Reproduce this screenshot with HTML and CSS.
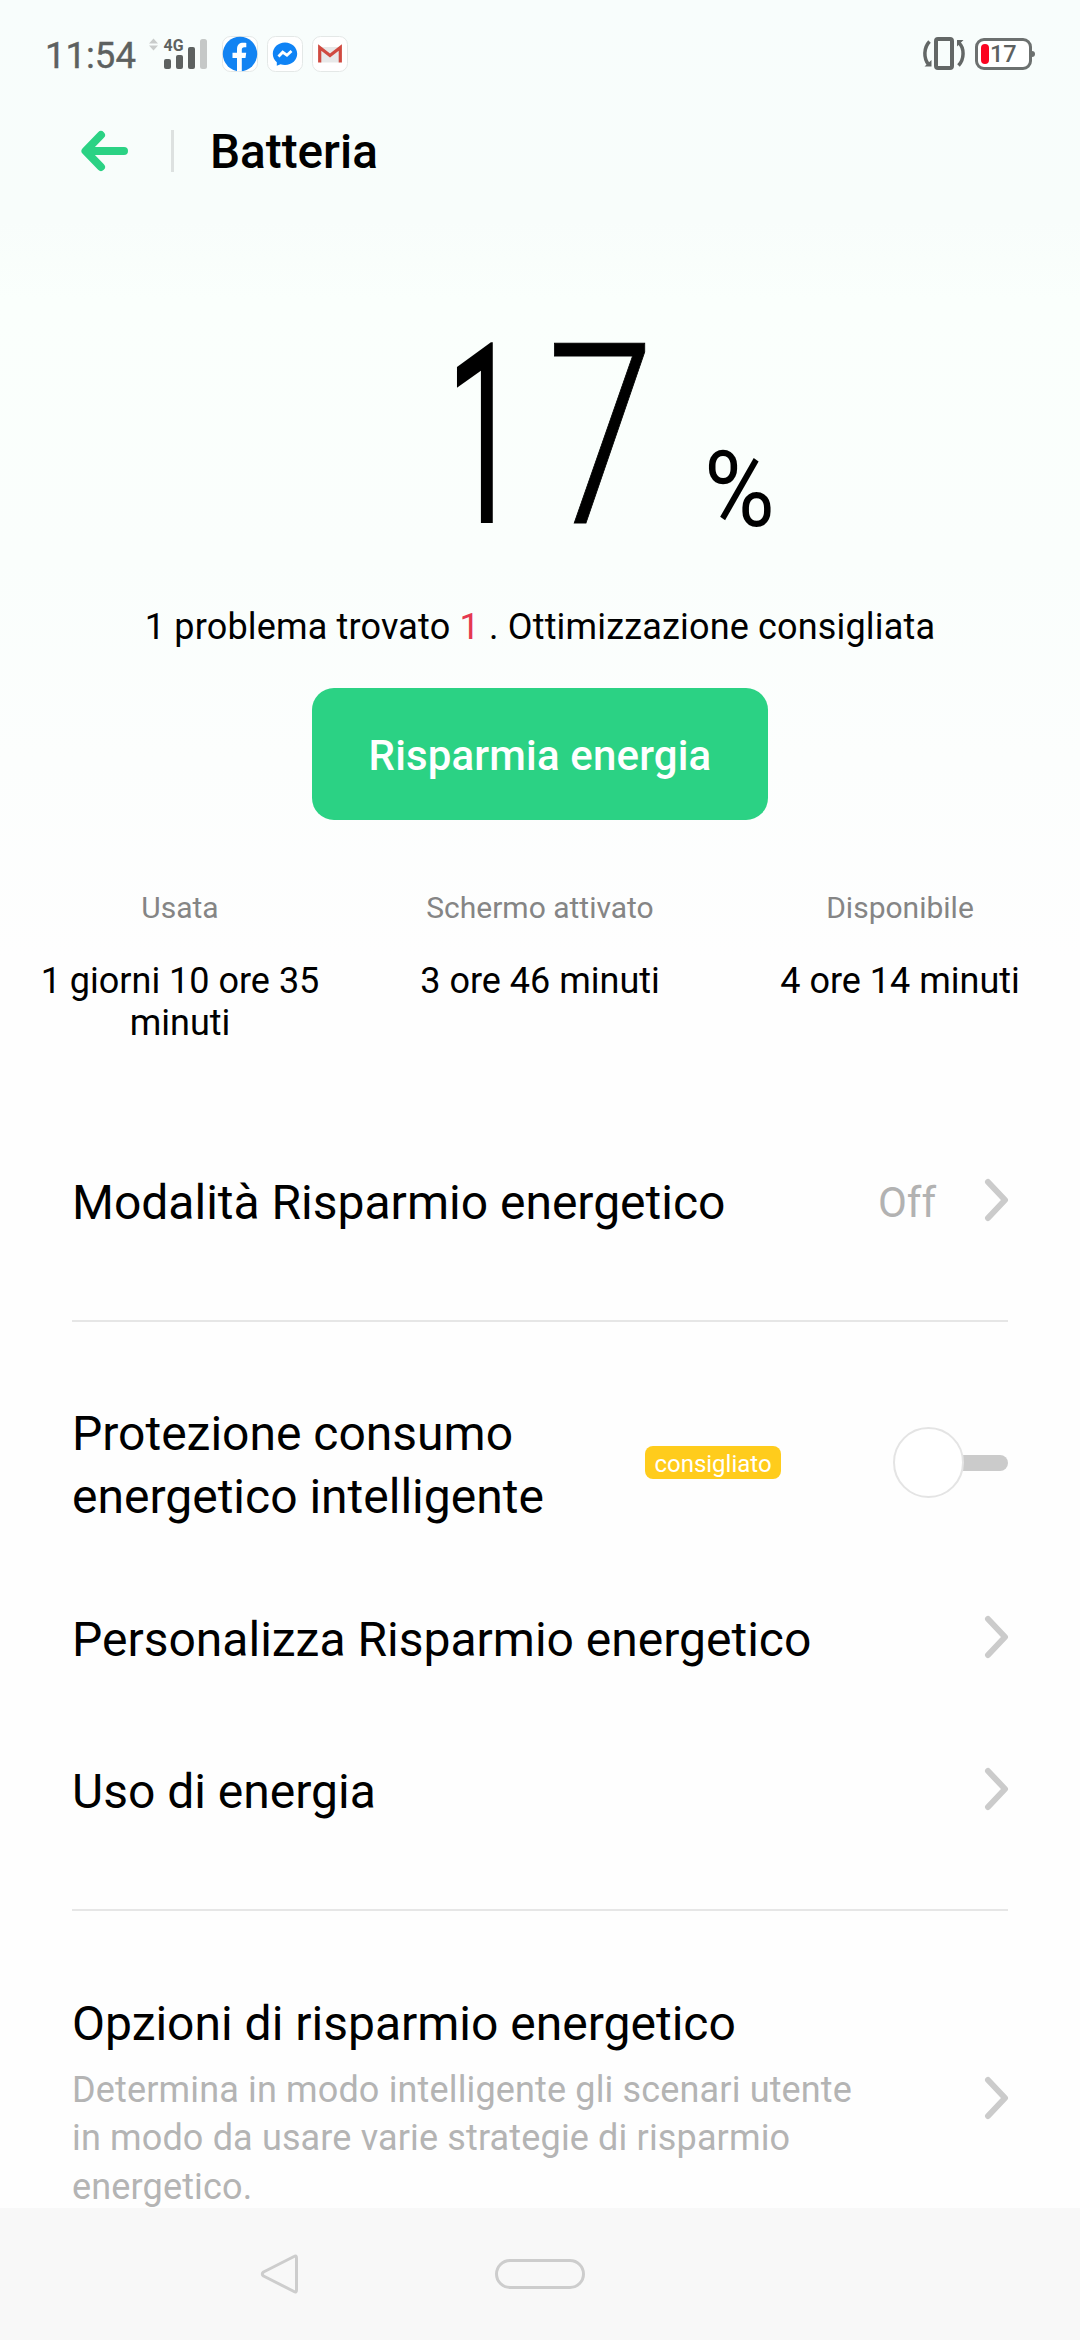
FILE: index.html
```html
<!DOCTYPE html>
<html lang="it">
<head>
<meta charset="utf-8">
<title>Batteria</title>
<link rel="stylesheet" href="styles.css">
</head>
<body>
<div class="screen">
  <header class="status">
    <span class="clock">11:54</span>
    <svg class="signal" width="60" height="36" viewBox="0 0 60 36">
      <path d="M0 7.500L4.500 2.500L9 7.500zM0 9.500L4.500 14.500L9 9.500z" fill="#c9cccb"/>
      <text class="net" x="14.500" y="14.500" textLength="20" lengthAdjust="spacingAndGlyphs">4G</text>
      <g fill="#5d6160">
        <rect x="15" y="23" width="7" height="10" rx="2"/>
        <rect x="27" y="19" width="7" height="14" rx="2"/>
        <rect x="39" y="11" width="7" height="22" rx="2"/>
      </g>
      <rect x="51" y="3" width="7" height="30" rx="2.500" fill="#c5c8c7"/>
    </svg>
    <svg class="app" width="36" height="36" viewBox="0 0 36 36">
      <rect x=".5" y=".5" width="35" height="35" rx="8" fill="#fff" stroke="#e4e8e7"/>
      <circle cx="18" cy="18" r="17.200" fill="#1283f2"/>
      <path d="M15 35.500V22h-4.500v-5.200H15v-3.500c0-4.600 2.500-6.500 6.300-6.500 1.600 0 3 .2 3 .2v4.200h-2c-1.800 0-2.500 1-2.500 2.300v3.300h4.400l-.7 5.200h-3.700v13.500z" fill="#fff"/>
    </svg>
    <svg class="app" width="36" height="36" viewBox="0 0 36 36">
      <rect x=".5" y=".5" width="35" height="35" rx="8" fill="#fff" stroke="#e4e8e7"/>
      <path d="M18 6.500c-7 0-12.200 5-12.200 11.300 0 3.500 1.500 6.300 4 8.400v3.600l3.700-1.500c1.400.4 3 .7 4.500.7 7 0 12.200-5 12.200-11.200S25 6.500 18 6.500z" fill="#0f83f5"/>
      <path d="M11.500 20.500l4.200-4.300 4.200 3 4.600-4.300" fill="none" stroke="#fff" stroke-width="2.800"/>
    </svg>
    <svg class="app" width="36" height="36" viewBox="0 0 36 36">
      <rect x=".5" y=".5" width="35" height="35" rx="8" fill="#fff" stroke="#e4e8e7"/>
      <path d="M8 11h20v15.500H8z" fill="#e8e9e9"/>
      <path d="M7.700 26.500V11.500L18 19.500L28.300 11.500V26.500" fill="none" stroke="#d04a40" stroke-width="3.200"/>
    </svg>
    <svg class="vibrate" width="44" height="36" viewBox="0 0 44 36">
      <rect x="14" y="3" width="16" height="29" rx="2" fill="none" stroke="#636766" stroke-width="4"/>
      <path d="M7.500 5.500C1.500 12 1.500 22 6.500 28.500M36.500 29.500C42.500 23 42.500 12 37 7" fill="none" stroke="#636766" stroke-width="3.500"/>
      <path d="M2.500 30.500h7v-6.500zM35 4h6.500l-6.500 6.500z" fill="#636766"/>
    </svg>
    <div class="battery"><i></i><span>17</span></div>
  </header>

  <div class="toolbar">
    <svg width="48" height="42" viewBox="0 0 48 42" fill="none" stroke="#2bd284" stroke-width="8" stroke-linecap="round" stroke-linejoin="round">
      <path d="M43 21H6M20 5L4.500 21L20 37"/>
    </svg>
    <span class="rule"></span>
    <h1>Batteria</h1>
  </div>

  <section class="hero">
    <div class="level"><span class="one">1</span><span class="seven">7</span><span class="unit">%</span></div>
    <p class="notice">1 problema trovato <b>1</b> . Ottimizzazione consigliata</p>
    <button class="save">Risparmia energia</button>
  </section>

  <section class="stats">
    <div><h2>Usata</h2><p>1 giorni 10 ore 35 minuti</p></div>
    <div><h2>Schermo attivato</h2><p>3 ore 46 minuti</p></div>
    <div><h2>Disponibile</h2><p>4 ore 14 minuti</p></div>
  </section>

  <main class="list">
    <div class="row">
      <span class="title">Modalità Risparmio energetico</span>
      <span class="value">Off</span>
      <svg class="chev" width="26" height="44" viewBox="0 0 26 44"><path d="M4 4L21 22L4 40"/></svg>
    </div>
    <hr>
    <div class="row tall">
      <span class="title narrow">Protezione consumo energetico intelligente</span>
      <span class="badge">consigliato</span>
      <span class="toggle"><i></i></span>
    </div>
    <div class="row">
      <span class="title">Personalizza Risparmio energetico</span>
      <svg class="chev" width="26" height="44" viewBox="0 0 26 44"><path d="M4 4L21 22L4 40"/></svg>
    </div>
    <div class="row">
      <span class="title">Uso di energia</span>
      <svg class="chev" width="26" height="44" viewBox="0 0 26 44"><path d="M4 4L21 22L4 40"/></svg>
    </div>
    <hr>
    <div class="row options">
      <div class="copy">
        <span class="title">Opzioni di risparmio energetico</span>
        <p>Determina in modo intelligente gli scenari utente in modo da usare varie strategie di risparmio energetico.</p>
      </div>
      <svg class="chev" width="26" height="44" viewBox="0 0 26 44"><path d="M4 4L21 22L4 40"/></svg>
    </div>
  </main>

  <nav class="nav">
    <svg width="40" height="44" viewBox="0 0 40 44" fill="none" stroke="#cdcdcd" stroke-width="3" stroke-linejoin="round"><path d="M34 4.500Q36.500 3 36.500 6V38Q36.500 41 34 39.500L3.500 24Q1 22 3.500 20z"/></svg>
    <span class="home"></span>
  </nav>
</div>
</body>
</html>
```
FILE: styles.css
```css
* { box-sizing: border-box; margin: 0; padding: 0; }
body { font-family: Roboto, "Noto Sans", sans-serif; color: #000; background: #fefefe; }
.screen {
  width: 1080px; height: 2340px; overflow: hidden;
  display: flex; flex-direction: column;
  background: linear-gradient(#f8fdfc 0, #f8fdfb 220px, #fafffc 300px, #fafefc 560px, #fefefe 960px);
}
.screen > * { flex: none; }

.status { height: 108px; display: flex; align-items: center; padding-left: 45px; }
.clock { font-size: 36.500px; color: #5d6160; -webkit-text-stroke: .4px #5d6160; width: 104px; padding-top: 2px; }
.signal { margin-right: 13px; }
.net { font-size: 17px; font-weight: 700; fill: #5d6160; }
.app { margin-right: 9px; }
.vibrate { margin-left: auto; margin-right: 9px; }
.battery {
  position: relative; width: 57px; height: 32px; margin-right: 48px;
  border: 3px solid #6c706f; border-radius: 9px;
  display: flex; align-items: center; padding-left: 3px; background: #fff;
}
.battery::after { content: ""; position: absolute; right: -6px; top: 10px; width: 3px; height: 6px; background: #6c706f; border-radius: 0 3px 3px 0; }
.battery i { width: 8px; height: 20px; border-radius: 4px; background: #fb0320; }
.battery span { font-size: 23.500px; font-weight: 500; color: #5d6160; margin-left: 1px; }

.toolbar { height: 86px; display: flex; align-items: center; padding-left: 81px; }
.rule { width: 3px; height: 42px; background: #dde1e0; margin: 0 36px 0 42px; }
h1 { font-size: 47.700px; font-weight: 500; line-height: 60px; padding-top: 2px; }

.hero { display: flex; flex-direction: column; align-items: center; }
.level { height: 403px; width: 100%; display: flex; align-items: baseline; padding-left: 446px; white-space: nowrap; }
.level span { flex: none; transform-origin: left; }
.one, .seven { font-size: 253px; line-height: 485px; }
.one { width: 101px; transform: scaleX(.52); }
.seven { width: 157px; font-weight: 300; transform: scaleX(.765); -webkit-text-stroke: 1px #000; }
.unit { font-size: 105px; transform: translateY(3px) scaleX(.92); }
.notice { font-size: 36px; line-height: 60px; letter-spacing: .17px; }
.notice b { font-weight: 400; color: #e53950; }
.save {
  margin-top: 31px; width: 456px; height: 132px; border: 0; border-radius: 22px;
  background: #2bd284; color: #fff; font: 500 42px Roboto, sans-serif; letter-spacing: .15px; padding-top: 3px;
}

.stats { height: 306px; padding-top: 70px; display: grid; grid-template-columns: repeat(3, 360px); text-align: center; }
.stats div { padding: 0 30px; }
.stats h2 { font-size: 30px; line-height: 36px; font-weight: 400; color: #858585; }
.stats p { font-size: 36px; line-height: 42px; margin-top: 34px; }

.list { height: 1082px; padding: 0 72px; overflow: hidden; }
.row { height: 152px; display: flex; align-items: center; }
.title { font-size: 48px; line-height: 63px; margin-right: auto; }
.narrow { width: 573px; margin-right: 0; padding-top: 3px; }
.tall { height: 199px; }
.value { font-size: 42px; color: #b2b2b2; margin-right: 48px; }
.chev { fill: none; stroke: #cbcbcb; stroke-width: 6; stroke-linecap: round; stroke-linejoin: round; margin-bottom: 4px; margin-right: -2px; }
hr { border: 0; height: 2px; background: #e6e6e6; margin: 42px 0; }
.badge { width: 136px; height: 33px; border-radius: 8px; background: #ffcc1c; color: #fff; font-size: 24px; line-height: 36px; text-align: center; margin-bottom: 2px; }
.toggle { position: relative; width: 115px; height: 71px; margin-left: auto; margin-bottom: 2px; display: flex; align-items: center; justify-content: flex-end; }
.toggle::after { content: ""; width: 60px; height: 16px; border-radius: 8px; background: #cbcbcb; }
.toggle i { position: absolute; left: 0; top: 0; width: 71px; height: 71px; border-radius: 50%; border: 2px solid #e4e4e4; background: #fff; }
.options { height: 294px; }
.options .copy { width: 810px; margin-right: auto; padding-top: 3px; }
.options .title { display: block; margin-bottom: 11px; }
.options p { font-size: 36px; line-height: 48.500px; letter-spacing: .15px; color: #b4b4b4; }

.nav { height: 132px; background: #f8f8f8; display: flex; align-items: center; padding-left: 260px; }
.home { width: 90px; height: 30px; border: 3px solid #cdcdcd; border-radius: 15px; margin-left: 195px; }
```
